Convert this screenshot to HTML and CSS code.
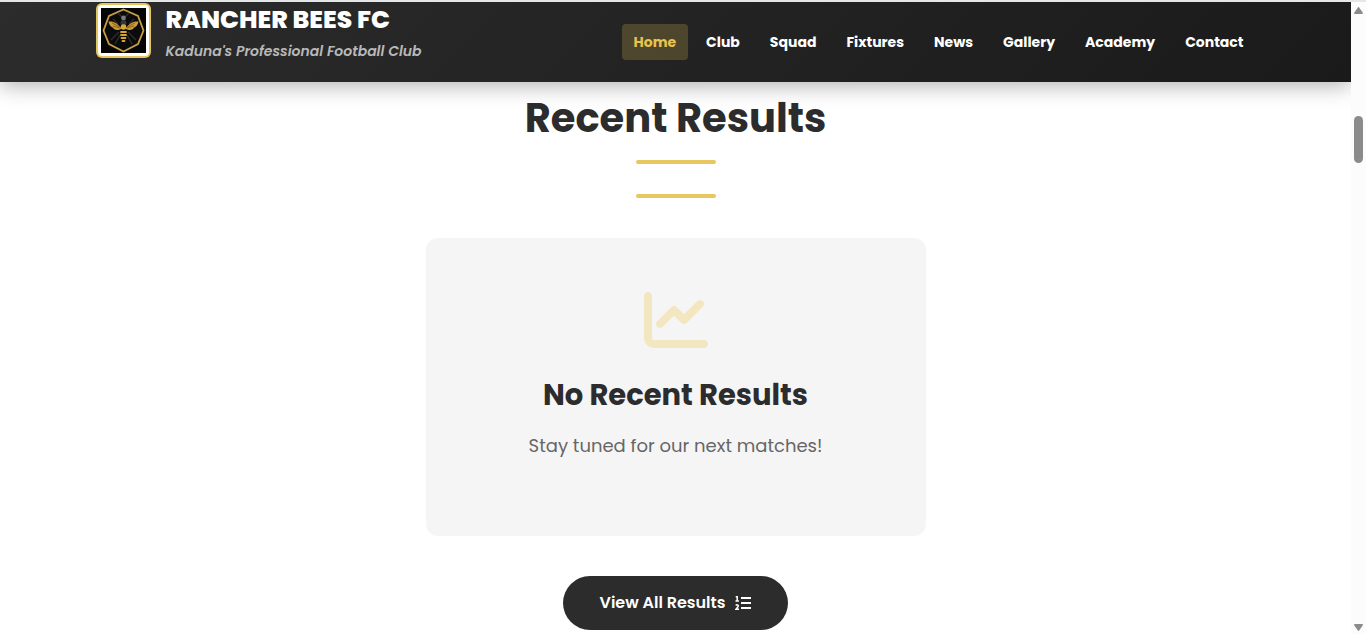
FILE: index.html
```
<!DOCTYPE html>
<html lang="en">

<head>
    <meta charset="UTF-8">
    <meta name="viewport" content="width=device-width, initial-scale=1.0">
    <title>Rancher Bees FC</title>
    <link rel="stylesheet" href="styles.css">
</head>

<body>
    <div class="page">
        <header class="header">
            <div class="header-container">
                <div class="brand">
                    <svg class="logo" viewBox="0 0 55 55" aria-hidden="true">
                        <rect width="55" height="55" rx="6" fill="#e5c55f"/>
                        <rect x="2" y="2" width="51" height="51" rx="4" fill="#fff"/>
                        <rect x="5" y="5" width="45" height="45" fill="#050505"/>
                        <path d="M27.5 6.5L42 13L47.5 27.5L42 41L27.5 48.5L13 41L7.5 27.5L13 13Z" fill="#0b0b0b" stroke="#c79d45" stroke-width="1.8"/>
                        <path d="M27 15l-5-5M28 15l5-5M23 29l-8 8M32 29l8 8M24 32l-5 9M31 32l5 9M17 16l5 5M38 16l-5 5" stroke="#2c2d2e" stroke-width="1.4" fill="none"/>
                        <path d="M25 25C21 19 16 18 12.500 18.500C13 22 15 24 17.500 25C17 26.500 22 28 25 26Z" fill="#cd9d34"/>
                        <path d="M30 25C34 19 39 18 42.500 18.500C42 22 40 24 37.500 25C38 26.500 33 28 30 26Z" fill="#cd9d34"/>
                        <path d="M16 20l8 4M17 23l7 2M39 20l-8 4M38 23l-7 2" stroke="#6b4c14" stroke-width=".7"/>
                        <circle cx="27.500" cy="15" r="2.400" fill="#777b80"/>
                        <ellipse cx="27.500" cy="20" rx="3" ry="3" fill="#35383b"/>
                        <ellipse cx="27.500" cy="24" rx="2.800" ry="2.800" fill="#d7a936"/>
                        <path d="M25 29h5M25 32h5M25.500 35h4M26.500 38h2" stroke="#d5a434" stroke-width="1.800" stroke-linecap="round"/>
                    </svg>
                    <div class="brand-text">
                        <h1>RANCHER BEES FC</h1>
                        <p>Kaduna's Professional Football Club</p>
                    </div>
                </div>
                <nav class="nav">
                    <a href="#" class="active">Home</a>
                    <a href="#">Club</a>
                    <a href="#">Squad</a>
                    <a href="#">Fixtures</a>
                    <a href="#">News</a>
                    <a href="#">Gallery</a>
                    <a href="#">Academy</a>
                    <a href="#">Contact</a>
                </nav>
            </div>
        </header>

        <main class="results">
            <h2 class="section-title">Recent Results</h2>
            <div class="divider"></div>
            <div class="divider"></div>
            <div class="no-results">
                <svg class="chart-icon" viewBox="0 0 512 512" aria-hidden="true">
                    <path d="M64 64c0-17.700-14.300-32-32-32S0 46.300 0 64V400c0 44.200 35.800 80 80 80H480c17.700 0 32-14.300 32-32s-14.300-32-32-32H80c-8.800 0-16-7.200-16-16V64zm406.600 86.600c12.500-12.500 12.500-32.800 0-45.300s-32.800-12.500-45.300 0L320 210.700l-57.400-57.400c-12.500-12.500-32.800-12.500-45.300 0l-112 112c-12.500 12.500-12.500 32.800 0 45.300s32.800 12.500 45.300 0L240 221.300l57.400 57.400c12.500 12.500 32.800 12.500 45.300 0l128-128z"/>
                </svg>
                <h3>No Recent Results</h3>
                <p>Stay tuned for our next matches!</p>
            </div>
            <a href="#" class="btn">
                View All Results
                <svg class="list-icon" viewBox="0 0 16 16" aria-hidden="true">
                    <path d="M6 3h10M6 8h10M6 13h10" stroke-width="2"/>
                    <path d="M.7 1.700H2.200V6M.5 6h3.400M.8 10.500C1.600 9.300 3.700 9.800 3.200 11.400L1 14.200H4" stroke-width="1.500"/>
                </svg>
            </a>
        </main>
    </div>

    <div class="scrollbar" aria-hidden="true">
        <svg class="arrow" viewBox="0 0 9 7"><path d="M4.500 0Q5 0 5.500 1L9 6Q9 7 8 7H1Q0 7 0 6L3.500 1Q4 0 4.500 0Z"/></svg>
        <div class="track">
            <div class="thumb"></div>
        </div>
        <svg class="arrow down" viewBox="0 0 9 7"><path d="M4.500 0Q5 0 5.500 1L9 6Q9 7 8 7H1Q0 7 0 6L3.500 1Q4 0 4.500 0Z"/></svg>
    </div>
</body>

</html>
```
FILE: styles.css
```
* {
    margin: 0;
    padding: 0;
    box-sizing: border-box;
}

body {
    font-family: 'Poppins', 'Inter', sans-serif;
    display: flex;
    height: 100vh;
    overflow: hidden;
    background-color: #ffffff;
    color: #2c2c2c;
    border-top: 2px solid #e4e6e8;
}

.page {
    flex: 1;
    min-width: 0;
    overflow: hidden;
}

/* Header */
.header {
    height: 80px;
    background: linear-gradient(135deg, #2c2c2c 0%, #1a1a1a 100%);
    box-shadow: 0 4px 20px rgba(0, 0, 0, 0.3);
}

.header-container {
    display: flex;
    justify-content: space-between;
    align-items: center;
    max-width: 1160px;
    height: 100%;
    margin: 0 auto;
}

.brand {
    display: flex;
    align-self: flex-start;
    align-items: flex-start;
    gap: 15px;
    padding-top: 1px;
}

.logo {
    width: 55px;
    height: 55px;
}

.brand-text h1 {
    font-size: 25px;
    font-weight: 800;
    line-height: 34px;
    color: #ffffff;
}

.brand-text p {
    font-size: 14px;
    font-weight: 600;
    font-style: italic;
    line-height: 28px;
    color: #b8b8b8;
}

.nav {
    display: flex;
    gap: 6px;
}

.nav a {
    padding: 0 12px;
    font-size: 14px;
    font-weight: 700;
    line-height: 36px;
    color: #ffffff;
    text-decoration: none;
    border-radius: 4px;
}

.nav a.active,
.nav a:hover {
    color: #e8c44f;
    background-color: rgba(232, 196, 79, 0.22);
}

/* Recent results */
.results {
    display: flex;
    flex-direction: column;
    align-items: center;
    padding-top: 6px;
}

.section-title {
    font-size: 40px;
    font-weight: 700;
    line-height: 60px;
    margin-bottom: 12px;
}

.divider {
    width: 80px;
    height: 4px;
    margin-bottom: 30px;
    background-color: #e8c660;
    border-radius: 2px;
}

.no-results {
    display: flex;
    flex-direction: column;
    align-items: center;
    width: 100%;
    max-width: 500px;
    margin: 10px 0 40px;
    padding: 50px 30px 75px;
    background-color: #f5f5f5;
    border-radius: 12px;
}

.chart-icon {
    width: 64px;
    height: 64px;
    margin-bottom: 21px;
    fill: #f3e7c2;
}

.no-results h3 {
    font-size: 29px;
    font-weight: 700;
    line-height: 44px;
    margin-bottom: 14px;
}

.no-results p {
    font-size: 18px;
    line-height: 30px;
    color: #666666;
}

.btn {
    display: flex;
    align-items: center;
    gap: 10px;
    padding: 0 37px;
    font-size: 16px;
    font-weight: 600;
    line-height: 54px;
    color: #ffffff;
    text-decoration: none;
    background-color: #2c2c2c;
    border-radius: 50px;
}

.list-icon {
    width: 16px;
    height: 16px;
    fill: none;
    stroke: #ffffff;
}

/* Scrollbar */
.scrollbar {
    display: flex;
    flex-direction: column;
    align-items: center;
    width: 15px;
    padding: 5px 0 3px;
    background-color: #fcfcfc;
}

.arrow {
    width: 9px;
    height: 7px;
    fill: #8b8b8b;
}

.arrow.down {
    transform: rotate(180deg);
}

.track {
    flex: 1;
    padding-top: 102px;
}

.thumb {
    width: 9px;
    height: 47px;
    background-color: #8b8b8b;
    border-radius: 5px;
}
```
